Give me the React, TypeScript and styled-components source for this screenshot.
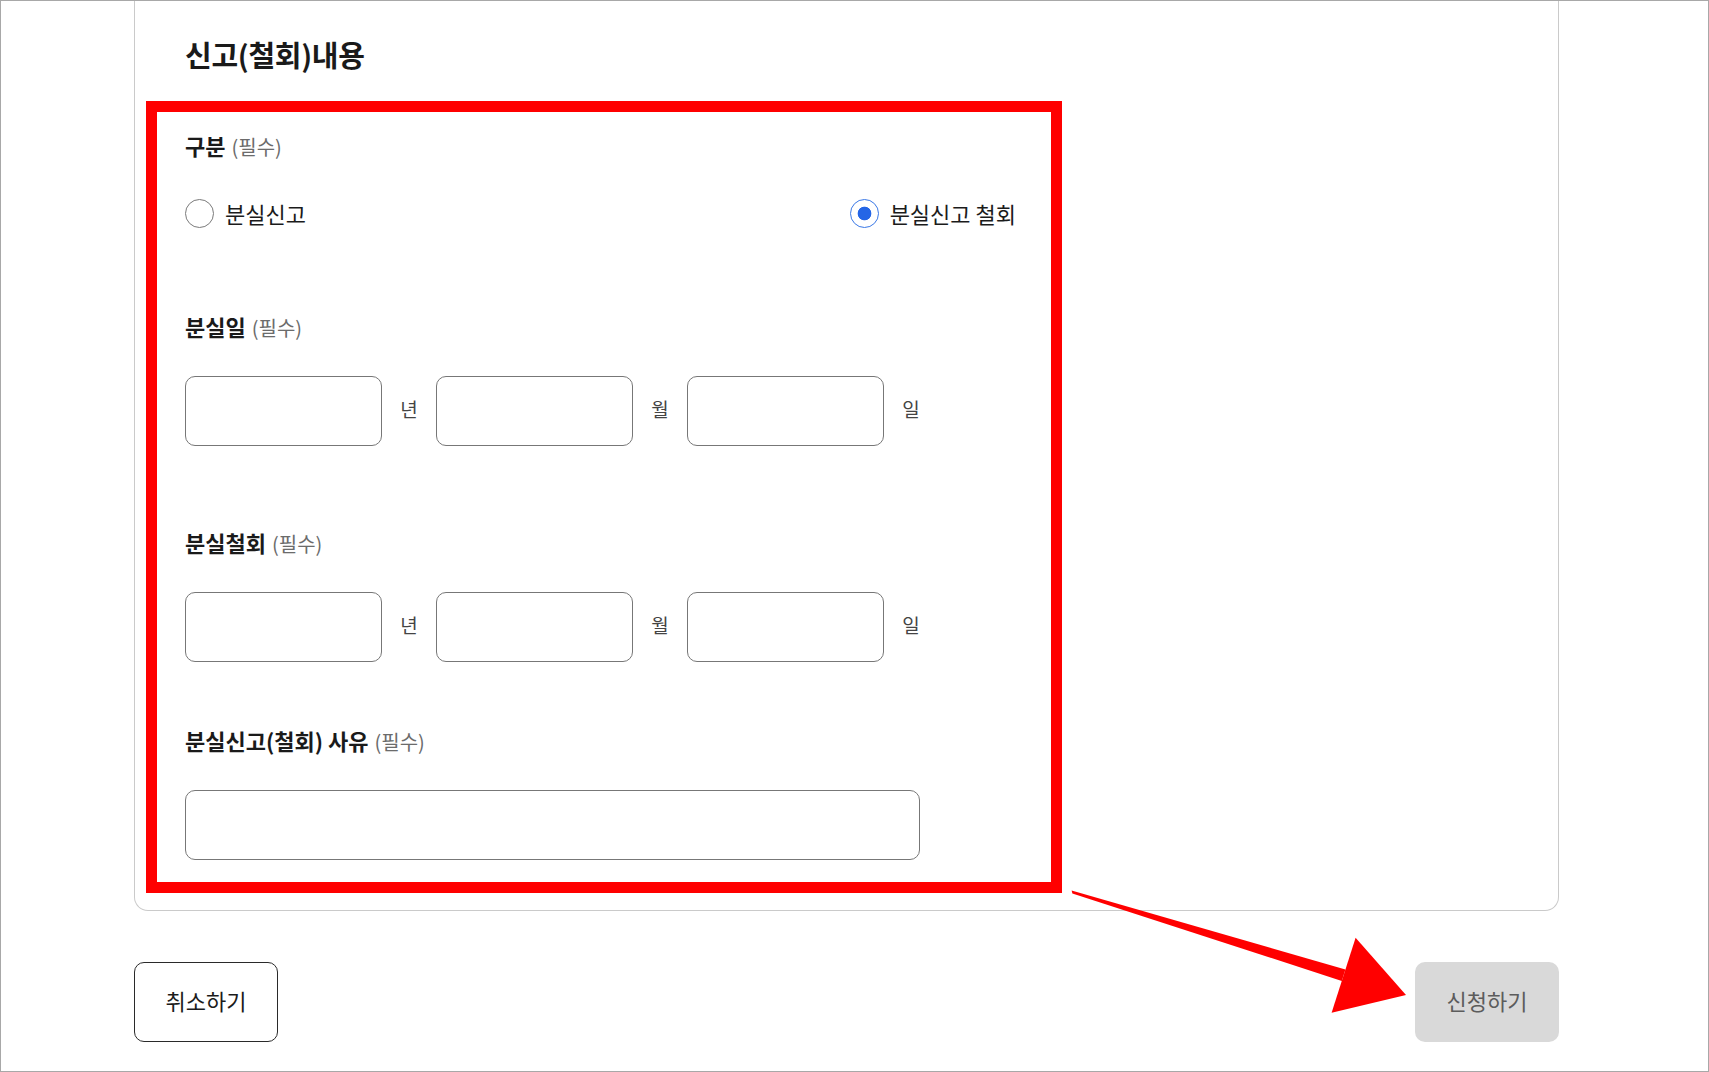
import React, { useState } from 'react';
import styled, { createGlobalStyle } from 'styled-components';

const GlobalStyle = createGlobalStyle`
  html, body {
    margin: 0;
    padding: 0;
    background: #fff;
  }
  body {
    font-family: 'Noto Sans CJK KR', 'Noto Sans', sans-serif;
    color: #1b1b1b;
  }
  * {
    box-sizing: border-box;
  }
`;

const Page = styled.div`
  position: relative;
  width: 1709px;
  height: 1072px;
  overflow: hidden;
`;

const Frame = styled.div`
  width: 100%;
  height: 100%;
  border: 1px solid #a8a8a8;
`;

const Card = styled.section`
  width: 1425px;
  margin-left: 133px;
  padding: 33px 0 17px 11px;
  border: 1px solid #cacaca;
  border-top: none;
  border-radius: 0 0 14px 14px;
`;

const SectionTitle = styled.h2`
  margin: 0 0 27px 39px;
  font-size: 29px;
  line-height: 40px;
  font-weight: 700;
  letter-spacing: -0.3px;
  color: #1a1a1a;
`;

// red annotation frame around the form fields
const Highlight = styled.div`
  width: 916px;
  border: 11px solid #ff0000;
  padding: 21px 35px 22px 28px;
`;

const Field = styled.div<{ $top?: number; $inner?: number }>`
  display: flex;
  flex-direction: column;
  gap: ${p => p.$inner ?? 34}px;
  margin-top: ${p => p.$top ?? 0}px;
`;

const FieldLabel = styled.div`
  display: flex;
  align-items: baseline;
  height: 28px;
  line-height: 24px;
  font-size: 22px;
  font-weight: 700;
  color: #1a1a1a;
`;

const Required = styled.span`
  margin-left: 6px;
  font-size: 20px;
  font-weight: 400;
  color: #6b6b6b;
`;

const RadioRow = styled.div`
  display: flex;
  justify-content: space-between;
  align-items: center;
  height: 29px;
`;

const RadioOption = styled.label`
  display: flex;
  align-items: center;
  gap: 11px;
  font-size: 22px;
  line-height: 29px;
  color: #1b1b1b;
  cursor: pointer;
`;

const RadioInput = styled.input.attrs({ type: 'radio' })`
  appearance: none;
  margin: 0;
  width: 29px;
  height: 29px;
  border-radius: 50%;
  border: 1px solid #7a7a7a;
  background: #fff;
  cursor: pointer;

  &:checked {
    border-color: #3a78e6;
    background: radial-gradient(circle, #2566e6 0 6.5px, #fff 7.2px);
  }
`;

const DateRow = styled.div`
  display: flex;
  align-items: center;
`;

const DateBox = styled.input`
  width: 197px;
  height: 70px;
  padding: 0 14px;
  border: 1px solid #777;
  border-radius: 10px;
  font-family: inherit;
  font-size: 18px;
  outline: none;
`;

const Unit = styled.span`
  width: 54px;
  padding-bottom: 5px;
  text-align: center;
  font-size: 19px;
  color: #444;
`;

const ReasonBox = styled(DateBox)`
  width: 735px;
`;

const ButtonBar = styled.div`
  display: flex;
  justify-content: space-between;
  width: 1425px;
  margin: 51px 0 0 133px;
`;

const ActionButton = styled.button<{ $primary?: boolean }>`
  width: 144px;
  height: 80px;
  padding: 0 0 5px;
  border-radius: 10px;
  border: ${p => (p.$primary ? 'none' : '1px solid #2a2a2a')};
  background: ${p => (p.$primary ? '#d9d9d9' : '#fff')};
  color: ${p => (p.$primary ? '#5c5c5c' : '#1b1b1b')};
  font-family: inherit;
  font-size: 22px;
  cursor: pointer;
`;

const ArrowLayer = styled.svg`
  position: absolute;
  left: 0;
  top: 0;
  pointer-events: none;
`;

const DateInputs = () => (
  <DateRow>
    <DateBox />
    <Unit>년</Unit>
    <DateBox />
    <Unit>월</Unit>
    <DateBox />
    <Unit>일</Unit>
  </DateRow>
);

const App: React.FC = () => {
  const [kind, setKind] = useState<'report' | 'withdraw'>('withdraw');

  return (
    <Page>
      <GlobalStyle />
      <Frame>
        <Card>
          <SectionTitle>신고(철회)내용</SectionTitle>
          <Highlight>
            <Field $inner={38}>
              <FieldLabel>
                구분<Required>(필수)</Required>
              </FieldLabel>
              <RadioRow>
                <RadioOption>
                  <RadioInput
                    name="kind"
                    checked={kind === 'report'}
                    onChange={() => setKind('report')}
                  />
                  분실신고
                </RadioOption>
                <RadioOption>
                  <RadioInput
                    name="kind"
                    checked={kind === 'withdraw'}
                    onChange={() => setKind('withdraw')}
                  />
                  분실신고 철회
                </RadioOption>
              </RadioRow>
            </Field>

            <Field $top={86}>
              <FieldLabel>
                분실일<Required>(필수)</Required>
              </FieldLabel>
              <DateInputs />
            </Field>

            <Field $top={84}>
              <FieldLabel>
                분실철회<Required>(필수)</Required>
              </FieldLabel>
              <DateInputs />
            </Field>

            <Field $top={66}>
              <FieldLabel>
                분실신고(철회) 사유<Required>(필수)</Required>
              </FieldLabel>
              <ReasonBox />
            </Field>
          </Highlight>
        </Card>

        <ButtonBar>
          <ActionButton>취소하기</ActionButton>
          <ActionButton $primary>신청하기</ActionButton>
        </ButtonBar>
      </Frame>

      <ArrowLayer width="1709" height="1072" viewBox="0 0 1709 1072">
        <polygon points="1071.6,890.6 1345.4,969.5 1341.8,980.9 1072.4,893.4" fill="#ff0000" />
        <polygon points="1355.6,937.7 1406,995 1331.6,1012.7" fill="#ff0000" />
      </ArrowLayer>
    </Page>
  );
};

export default App;
